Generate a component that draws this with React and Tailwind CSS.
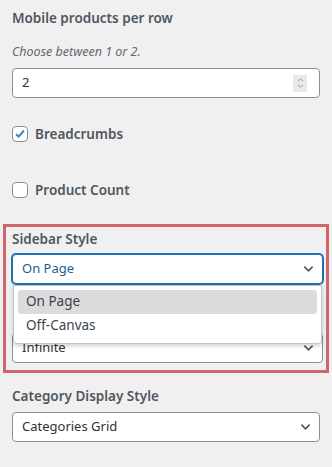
import React from 'react';

const Chevron = ({ className = '' }) => (
  <svg viewBox="0 0 12 8" className={className} fill="none" stroke="currentColor" strokeWidth="1.8">
    <path d="M1.5 1.5 6 6l4.5-4.5" />
  </svg>
);

const Label = ({ children }) => (
  <div className="text-[13.5px] font-semibold text-[#50575e] leading-5">{children}</div>
);

const Select = ({ value, focused = false }) => (
  <div
    className={`flex items-center justify-between h-[30px] bg-white rounded-[4px] pl-[9px] pr-[8px] ${
      focused ? 'border border-[#2271b1] shadow-[0_0_0_1px_#2271b1] text-[#1f5f8f]' : 'border border-[#8c8f94] text-[#2c3338]'
    }`}
  >
    <span className="text-[13px]">{value}</span>
    <Chevron className="w-[11px] h-[8px] text-[#50575e]" />
  </div>
);

const Checkbox = ({ checked, label }) => (
  <div className="flex items-center gap-[7px]">
    <div className="w-4 h-4 bg-white border border-[#8c8f94] rounded-[4px] flex items-center justify-center">
      {checked && (
        <svg viewBox="0 0 16 16" className="w-[14px] h-[14px]" fill="none" stroke="#3582c4" strokeWidth="2.2">
          <path d="M3.5 8.2 6.5 11l6-7" />
        </svg>
      )}
    </div>
    <span className="text-[13.5px] font-semibold text-[#50575e]">{label}</span>
  </div>
);

export default function App() {
  return (
    <div
      className="w-[332px] h-[467px] bg-[#f0f0f1] px-3 overflow-hidden"
      style={{ fontFamily: '"Noto Sans", "Liberation Sans", sans-serif' }}
    >
      <div className="pt-[8px]">
        <Label>Mobile products per row</Label>
        <div className="mt-[14px] text-[12.5px] italic text-[#646970] leading-5">Choose between 1 or 2.</div>
        <div className="mt-[6px] flex items-center justify-between h-[30px] bg-white border border-[#8c8f94] rounded-[4px] pl-[9px] pr-[12px]">
          <span className="text-[13px] text-[#2c3338]">2</span>
          <div className="w-[14px] h-[17px] bg-[#e9e9ed] flex flex-col items-center justify-center gap-[2px]">
            <svg viewBox="0 0 8 5" className="w-[7px] h-[4px]" fill="none" stroke="#8a8a8f" strokeWidth="1.1">
              <path d="M1 4 4 1l3 3" />
            </svg>
            <svg viewBox="0 0 8 5" className="w-[7px] h-[4px]" fill="none" stroke="#8a8a8f" strokeWidth="1.1">
              <path d="M1 1l3 3 3-3" />
            </svg>
          </div>
        </div>
      </div>

      <div className="mt-[26px]">
        <Checkbox checked label="Breadcrumbs" />
      </div>
      <div className="mt-[36px]">
        <Checkbox label="Product Count" />
      </div>

      <div className="relative mt-[23px] -mx-[9px] border-[3px] border-[#d1656b] pl-[6px] pr-[3px] pt-[2px] pb-[7px]">
        <Label>Sidebar Style</Label>
        <div className="relative mt-[5px]">
          <Select value="On Page" focused />
          <div className="absolute left-[1px] right-[1px] top-[31px] z-10 bg-white border border-[#c3c4c7] rounded-b-[4px] shadow-[0_2px_4px_rgba(0,0,0,0.18)] p-[4px] pb-[5px]">
            <div className="h-[24px] rounded-[3px] bg-[#dcdcde] flex items-center pl-[8px] text-[13.5px] text-[#3c434a]">On Page</div>
            <div className="h-[24px] flex items-center pl-[8px] text-[13.5px] text-[#3c434a]">Off-Canvas</div>
          </div>
        </div>
        <div className="mt-[49px]">
          <Select value="Infinite" />
        </div>
      </div>

      <div className="mt-[13px]">
        <Label>Category Display Style</Label>
        <div className="mt-[6px]">
          <Select value="Categories Grid" />
        </div>
      </div>
    </div>
  );
}
